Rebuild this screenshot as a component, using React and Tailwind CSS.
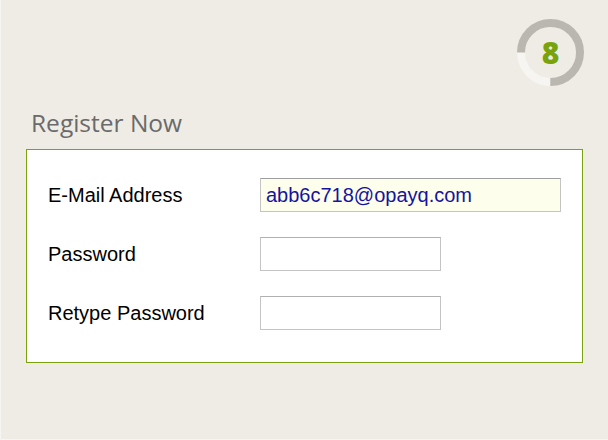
import React from 'react';

const fields = [
  { label: 'E-Mail Address', value: 'abb6c718@opayq.com', wide: true },
  { label: 'Password', value: '', wide: false },
  { label: 'Retype Password', value: '', wide: false },
];

const Countdown = ({ value }) => {
  const r = 29.5;
  const c = 2 * Math.PI * r;
  return (
    <div className="relative w-[67px] h-[67px]">
      <svg width="67" height="67" viewBox="0 0 67 67" className="absolute inset-0">
        <circle cx="33.5" cy="33.5" r={r} fill="none" stroke="#f6f5f1" strokeWidth="8" />
        <circle
          cx="33.5"
          cy="33.5"
          r={r}
          fill="none"
          stroke="#b9b7b0"
          strokeWidth="8"
          strokeDasharray={`${c * 0.75} ${c}`}
          transform="rotate(-180 33.5 33.5)"
        />
      </svg>
      <div className="absolute inset-0 flex items-center justify-center font-['Open_Sans',sans-serif] font-extrabold text-[30px] text-[#78a30c]">
        {value}
      </div>
    </div>
  );
};

export default function App() {
  return (
    <div className="w-[608px] h-[440px] bg-[#efece5] border-l border-b border-[#f6f5f1] flex flex-col">
      <div className="flex justify-end pt-[19px] pr-[24px]">
        <Countdown value={8} />
      </div>
      <h1 className="mt-[23px] ml-[30px] font-['Open_Sans',sans-serif] text-[24.5px] leading-[28px] text-[#6a6a6a]">
        Register Now
      </h1>
      <div className="mt-[12px] ml-[25px] w-[557px] bg-white border border-[#7aa30f] pt-[28px] pb-[32px] pl-[21px] flex flex-col gap-[25px]">
        {fields.map((f) => (
          <div key={f.label} className="flex items-center h-[34px]">
            <label className="w-[212px] font-['Liberation_Sans',Arial,sans-serif] text-[20px] text-black">
              {f.label}
            </label>
            <div
              className={`h-[34px] border border-[#c4c4c4] border-t-[#9e9e9e] flex items-center px-[5px] font-['Liberation_Sans',Arial,sans-serif] text-[20px] text-[#1414a0] ${
                f.wide ? 'w-[301px] bg-[#fefeec]' : 'w-[181px] bg-white border-t-[#b0b0b0]'
              }`}
            >
              {f.value}
            </div>
          </div>
        ))}
      </div>
    </div>
  );
}
